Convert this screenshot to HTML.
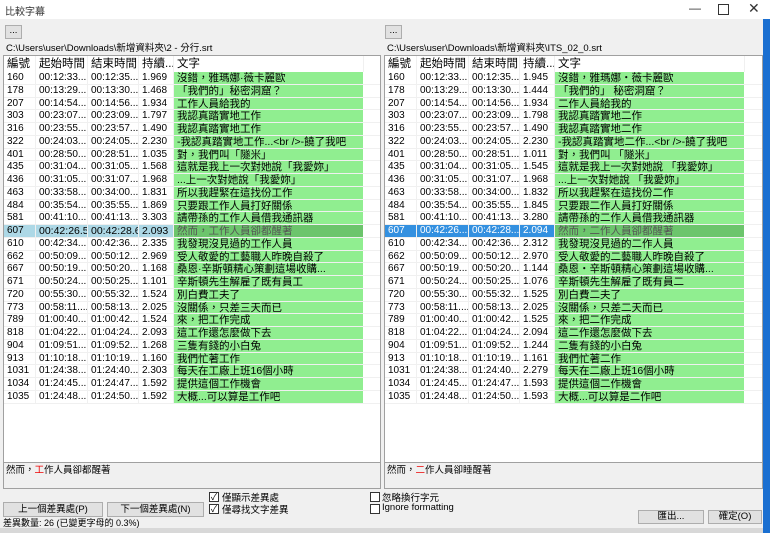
<!DOCTYPE html>
<html><head><meta charset="utf-8"><style>
body{margin:0;width:770px;height:533px;overflow:hidden;background:#f0f0f0;font-family:"Liberation Sans","Noto Sans CJK TC",sans-serif;font-size:11px;color:#000;position:relative}
.a{position:absolute}
.title{left:0;top:0;width:770px;height:19px;background:#fff}
.grid{background:#fff;border:1px solid #a0a0a0;box-sizing:border-box;overflow:hidden}
.hd{height:16px;display:flex;font-size:11.5px;line-height:16px}
.hd span,.r span{display:block;box-sizing:border-box;padding-left:3px;white-space:nowrap;overflow:hidden;border-right:1px solid #f0f0f0}
.r{height:12.75px;display:flex;line-height:12.75px;font-size:10px;border-bottom:1px solid #f0f0f0;box-sizing:border-box}
.r span.t{background:#90ee90;font-size:10.5px;border-right:1px solid #fff}
.c1{width:32px}.c2{width:52px}.c3{width:51px}.c4{width:35px}.c5{width:190px}
.sel span{background:#add8e6}
.sel2 span{background:#3390e0;color:#fff}
.r.sel span.t,.r.sel2 span.t{background:#6cc56c;color:#555}
.btn{background:#e1e1e1;border:1px solid #adadad;box-sizing:border-box;text-align:center;font-size:9.5px}
.cb{width:10px;height:10px;border:1px solid #333;background:#fff;box-sizing:border-box;font-size:9px;line-height:8px;text-align:center}
.box{background:#f0f0f0;border:1px solid #a0a0a0;box-sizing:border-box;font-size:9.5px;padding:2px 2px;line-height:12px}
.lb{font-size:9.5px}
</style></head><body>
<div class="a title"></div>
<div class="a" style="left:5px;top:3px;font-size:10px;color:#333">比較字幕</div>
<div class="a" style="left:689px;top:1px;font-size:12px;color:#333">—</div>
<div class="a" style="left:718px;top:4px;width:9px;height:9px;border:1px solid #333"></div>
<div class="a" style="left:748px;top:0px;font-size:14px;color:#333">✕</div>
<div class="a" style="left:763px;top:19px;width:7px;height:514px;background:#1a6fd1"></div>
<div class="a btn" style="left:5px;top:25px;width:17px;height:14px;line-height:10px">...</div>
<div class="a btn" style="left:385px;top:25px;width:17px;height:14px;line-height:10px">...</div>
<div class="a" style="left:6px;top:40px;font-size:9.5px">C:\Users\user\Downloads\新增資料夾\2 - 分行.srt</div>
<div class="a" style="left:387px;top:40px;font-size:9.5px">C:\Users\user\Downloads\新增資料夾\ITS_02_0.srt</div>

<div class="a grid" style="left:3px;top:55px;width:378px;height:408px">
<div class="hd"><span class="c1">編號</span><span class="c2">起始時間</span><span class="c3">結束時間</span><span class="c4">持續...</span><span class="c5">文字</span></div>
<div class="r"><span class="c1">160</span><span class="c2">00:12:33....</span><span class="c3">00:12:35....</span><span class="c4">1.969</span><span class="c5 t">沒錯，雅瑪娜·薇卡麗歐</span></div>
<div class="r"><span class="c1">178</span><span class="c2">00:13:29....</span><span class="c3">00:13:30....</span><span class="c4">1.468</span><span class="c5 t">「我們的」秘密洞窟？</span></div>
<div class="r"><span class="c1">207</span><span class="c2">00:14:54....</span><span class="c3">00:14:56....</span><span class="c4">1.934</span><span class="c5 t">工作人員給我的</span></div>
<div class="r"><span class="c1">303</span><span class="c2">00:23:07....</span><span class="c3">00:23:09....</span><span class="c4">1.797</span><span class="c5 t">我認真踏實地工作</span></div>
<div class="r"><span class="c1">316</span><span class="c2">00:23:55....</span><span class="c3">00:23:57....</span><span class="c4">1.490</span><span class="c5 t">我認真踏實地工作</span></div>
<div class="r"><span class="c1">322</span><span class="c2">00:24:03....</span><span class="c3">00:24:05....</span><span class="c4">2.230</span><span class="c5 t">-我認真踏實地工作...&lt;br /&gt;-饒了我吧</span></div>
<div class="r"><span class="c1">401</span><span class="c2">00:28:50....</span><span class="c3">00:28:51....</span><span class="c4">1.035</span><span class="c5 t">對，我們叫「隧米」</span></div>
<div class="r"><span class="c1">435</span><span class="c2">00:31:04....</span><span class="c3">00:31:05....</span><span class="c4">1.568</span><span class="c5 t">這就是我上一次對她說「我愛妳」</span></div>
<div class="r"><span class="c1">436</span><span class="c2">00:31:05....</span><span class="c3">00:31:07....</span><span class="c4">1.968</span><span class="c5 t">...上一次對她說「我愛妳」</span></div>
<div class="r"><span class="c1">463</span><span class="c2">00:33:58....</span><span class="c3">00:34:00....</span><span class="c4">1.831</span><span class="c5 t">所以我趕緊在這找份工作</span></div>
<div class="r"><span class="c1">484</span><span class="c2">00:35:54....</span><span class="c3">00:35:55....</span><span class="c4">1.869</span><span class="c5 t">只要跟工作人員打好關係</span></div>
<div class="r"><span class="c1">581</span><span class="c2">00:41:10....</span><span class="c3">00:41:13....</span><span class="c4">3.303</span><span class="c5 t">請帶孫的工作人員借我通訊器</span></div>
<div class="r sel"><span class="c1">607</span><span class="c2" style="font-size:10.5px">00:42:26.54</span><span class="c3" style="font-size:10.5px">00:42:28.63</span><span class="c4" style="font-size:10.5px">2.093</span><span class="c5 t">然而，工作人員卻都醒著</span></div>
<div class="r"><span class="c1">610</span><span class="c2">00:42:34....</span><span class="c3">00:42:36....</span><span class="c4">2.335</span><span class="c5 t">我發現沒見過的工作人員</span></div>
<div class="r"><span class="c1">662</span><span class="c2">00:50:09....</span><span class="c3">00:50:12....</span><span class="c4">2.969</span><span class="c5 t">受人敬愛的工藝職人昨晚自殺了</span></div>
<div class="r"><span class="c1">667</span><span class="c2">00:50:19....</span><span class="c3">00:50:20....</span><span class="c4">1.168</span><span class="c5 t">桑恩·辛斯頓精心策劃這場收購...</span></div>
<div class="r"><span class="c1">671</span><span class="c2">00:50:24....</span><span class="c3">00:50:25....</span><span class="c4">1.101</span><span class="c5 t">辛斯頓先生解雇了既有員工</span></div>
<div class="r"><span class="c1">720</span><span class="c2">00:55:30....</span><span class="c3">00:55:32....</span><span class="c4">1.524</span><span class="c5 t">別白費工夫了</span></div>
<div class="r"><span class="c1">773</span><span class="c2">00:58:11....</span><span class="c3">00:58:13....</span><span class="c4">2.025</span><span class="c5 t">沒關係，只差三天而已</span></div>
<div class="r"><span class="c1">789</span><span class="c2">01:00:40....</span><span class="c3">01:00:42....</span><span class="c4">1.524</span><span class="c5 t">來，把工作完成</span></div>
<div class="r"><span class="c1">818</span><span class="c2">01:04:22....</span><span class="c3">01:04:24....</span><span class="c4">2.093</span><span class="c5 t">這工作還怎麼做下去</span></div>
<div class="r"><span class="c1">904</span><span class="c2">01:09:51....</span><span class="c3">01:09:52....</span><span class="c4">1.268</span><span class="c5 t">三隻有錢的小白兔</span></div>
<div class="r"><span class="c1">913</span><span class="c2">01:10:18....</span><span class="c3">01:10:19....</span><span class="c4">1.160</span><span class="c5 t">我們忙著工作</span></div>
<div class="r"><span class="c1">1031</span><span class="c2">01:24:38....</span><span class="c3">01:24:40....</span><span class="c4">2.303</span><span class="c5 t">每天在工廠上班16個小時</span></div>
<div class="r"><span class="c1">1034</span><span class="c2">01:24:45....</span><span class="c3">01:24:47....</span><span class="c4">1.592</span><span class="c5 t">提供這個工作機會</span></div>
<div class="r"><span class="c1">1035</span><span class="c2">01:24:48....</span><span class="c3">01:24:50....</span><span class="c4">1.592</span><span class="c5 t">大概...可以算是工作吧</span></div>
</div>

<div class="a grid" style="left:384px;top:55px;width:379px;height:408px">
<div class="hd"><span class="c1">編號</span><span class="c2">起始時間</span><span class="c3">結束時間</span><span class="c4">持續...</span><span class="c5">文字</span></div>
<div class="r"><span class="c1">160</span><span class="c2">00:12:33....</span><span class="c3">00:12:35....</span><span class="c4">1.945</span><span class="c5 t">沒錯，雅瑪娜・薇卡麗歐</span></div>
<div class="r"><span class="c1">178</span><span class="c2">00:13:29....</span><span class="c3">00:13:30....</span><span class="c4">1.444</span><span class="c5 t">「我們的」 秘密洞窟？</span></div>
<div class="r"><span class="c1">207</span><span class="c2">00:14:54....</span><span class="c3">00:14:56....</span><span class="c4">1.934</span><span class="c5 t">二作人員給我的</span></div>
<div class="r"><span class="c1">303</span><span class="c2">00:23:07....</span><span class="c3">00:23:09....</span><span class="c4">1.798</span><span class="c5 t">我認真踏實地二作</span></div>
<div class="r"><span class="c1">316</span><span class="c2">00:23:55....</span><span class="c3">00:23:57....</span><span class="c4">1.490</span><span class="c5 t">我認真踏實地二作</span></div>
<div class="r"><span class="c1">322</span><span class="c2">00:24:03....</span><span class="c3">00:24:05....</span><span class="c4">2.230</span><span class="c5 t">-我認真踏實地二作...&lt;br /&gt;-饒了我吧</span></div>
<div class="r"><span class="c1">401</span><span class="c2">00:28:50....</span><span class="c3">00:28:51....</span><span class="c4">1.011</span><span class="c5 t">對，我們叫 「隧米」</span></div>
<div class="r"><span class="c1">435</span><span class="c2">00:31:04....</span><span class="c3">00:31:05....</span><span class="c4">1.545</span><span class="c5 t">這就是我上一次對她說 「我愛妳」</span></div>
<div class="r"><span class="c1">436</span><span class="c2">00:31:05....</span><span class="c3">00:31:07....</span><span class="c4">1.968</span><span class="c5 t">...上一次對她說 「我愛妳」</span></div>
<div class="r"><span class="c1">463</span><span class="c2">00:33:58....</span><span class="c3">00:34:00....</span><span class="c4">1.832</span><span class="c5 t">所以我趕緊在這找份二作</span></div>
<div class="r"><span class="c1">484</span><span class="c2">00:35:54....</span><span class="c3">00:35:55....</span><span class="c4">1.845</span><span class="c5 t">只要跟二作人員打好關係</span></div>
<div class="r"><span class="c1">581</span><span class="c2">00:41:10....</span><span class="c3">00:41:13....</span><span class="c4">3.280</span><span class="c5 t">請帶孫的二作人員借我通訊器</span></div>
<div class="r sel2"><span class="c1">607</span><span class="c2">00:42:26....</span><span class="c3">00:42:28....</span><span class="c4">2.094</span><span class="c5 t">然而，二作人員卻都醒著</span></div>
<div class="r"><span class="c1">610</span><span class="c2">00:42:34....</span><span class="c3">00:42:36....</span><span class="c4">2.312</span><span class="c5 t">我發現沒見過的二作人員</span></div>
<div class="r"><span class="c1">662</span><span class="c2">00:50:09....</span><span class="c3">00:50:12....</span><span class="c4">2.970</span><span class="c5 t">受人敬愛的二藝職人昨晚自殺了</span></div>
<div class="r"><span class="c1">667</span><span class="c2">00:50:19....</span><span class="c3">00:50:20....</span><span class="c4">1.144</span><span class="c5 t">桑恩・辛斯頓精心策劃這場收購...</span></div>
<div class="r"><span class="c1">671</span><span class="c2">00:50:24....</span><span class="c3">00:50:25....</span><span class="c4">1.076</span><span class="c5 t">辛斯頓先生解雇了既有員二</span></div>
<div class="r"><span class="c1">720</span><span class="c2">00:55:30....</span><span class="c3">00:55:32....</span><span class="c4">1.525</span><span class="c5 t">別白費二夫了</span></div>
<div class="r"><span class="c1">773</span><span class="c2">00:58:11....</span><span class="c3">00:58:13....</span><span class="c4">2.025</span><span class="c5 t">沒關係，只差二天而已</span></div>
<div class="r"><span class="c1">789</span><span class="c2">01:00:40....</span><span class="c3">01:00:42....</span><span class="c4">1.525</span><span class="c5 t">來，把二作完成</span></div>
<div class="r"><span class="c1">818</span><span class="c2">01:04:22....</span><span class="c3">01:04:24....</span><span class="c4">2.094</span><span class="c5 t">這二作還怎麼做下去</span></div>
<div class="r"><span class="c1">904</span><span class="c2">01:09:51....</span><span class="c3">01:09:52....</span><span class="c4">1.244</span><span class="c5 t">二隻有錢的小白兔</span></div>
<div class="r"><span class="c1">913</span><span class="c2">01:10:18....</span><span class="c3">01:10:19....</span><span class="c4">1.161</span><span class="c5 t">我們忙著二作</span></div>
<div class="r"><span class="c1">1031</span><span class="c2">01:24:38....</span><span class="c3">01:24:40....</span><span class="c4">2.279</span><span class="c5 t">每天在二廠上班16個小時</span></div>
<div class="r"><span class="c1">1034</span><span class="c2">01:24:45....</span><span class="c3">01:24:47....</span><span class="c4">1.593</span><span class="c5 t">提供這個二作機會</span></div>
<div class="r"><span class="c1">1035</span><span class="c2">01:24:48....</span><span class="c3">01:24:50....</span><span class="c4">1.593</span><span class="c5 t">大概...可以算是二作吧</span></div>
</div>

<div class="a box" style="left:3px;top:462px;width:378px;height:27px">然而，<span style="color:#e00">工</span>作人員卻都醒著</div>
<div class="a box" style="left:384px;top:462px;width:379px;height:27px">然而，<span style="color:#e00">二</span>作人員卻睡醒著</div>

<div class="a btn" style="left:3px;top:502px;width:100px;height:15px;line-height:13px">上一個差異處(P)</div>
<div class="a btn" style="left:107px;top:502px;width:97px;height:15px;line-height:13px">下一個差異處(N)</div>
<div class="a cb" style="left:209px;top:492px">✓</div>
<div class="a lb" style="left:222px;top:490px">僅顯示差異處</div>
<div class="a cb" style="left:209px;top:504px">✓</div>
<div class="a lb" style="left:222px;top:502px">僅尋找文字差異</div>
<div class="a cb" style="left:370px;top:492px"></div>
<div class="a lb" style="left:382px;top:490px">忽略換行字元</div>
<div class="a cb" style="left:370px;top:504px"></div>
<div class="a lb" style="left:382px;top:502px">Ignore formatting</div>
<div class="a btn" style="left:638px;top:510px;width:66px;height:14px;line-height:12px">匯出...</div>
<div class="a btn" style="left:708px;top:510px;width:54px;height:14px;line-height:12px">確定(O)</div>
<div class="a" style="left:3px;top:516px;font-size:9px">差異數量: 26 (已變更字母的 0.3%)</div>
<div class="a" style="left:0;top:528px;width:763px;height:5px;background:#d8d8d8"></div>
</body></html>
